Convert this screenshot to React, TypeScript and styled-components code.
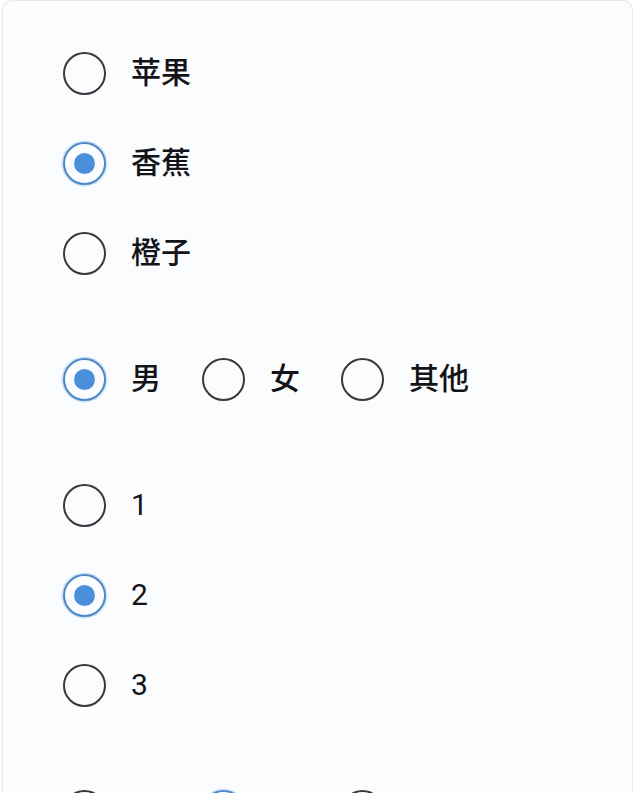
import React, { ReactElement, useState } from 'react';
import styled, { createGlobalStyle } from 'styled-components';

const GlobalStyle = createGlobalStyle`
  html, body {
    margin: 0;
    padding: 0;
    background: #ffffff;
  }
  body {
    font-family: Roboto, "Noto Sans CJK SC", sans-serif;
    color: #141418;
  }
`;

const Card = styled.div`
  margin: 0 5px 0 2px;
  padding: 27px 60px 40px;
  min-height: 900px;
  background: #fafcfd;
  border: 1px solid #e4e8ed;
  border-bottom: none;
  border-radius: 10px 10px 0 0;
  box-sizing: border-box;
`;

const Group = styled.div<{ $inline?: boolean }>`
  display: flex;
  flex-direction: ${props => (props.$inline ? 'row' : 'column')};
  margin-bottom: 36px;
`;

const Option = styled.label<{ $inline?: boolean; $light?: boolean }>`
  display: flex;
  align-items: center;
  gap: 25px;
  height: 90px;
  margin-right: ${props => (props.$inline ? '41px' : '0')};
  font-size: 30px;
  font-weight: ${props => (props.$light ? 400 : 500)};
  line-height: 1;
  cursor: pointer;
`;

const Radio = styled.input.attrs({ type: 'radio' })`
  appearance: none;
  margin: 0;
  width: 43px;
  height: 43px;
  border-radius: 50%;
  border: 2.5px solid #3a373d;
  box-sizing: border-box;
  display: grid;
  place-items: center;
  background: transparent;
  flex-shrink: 0;

  &::before {
    content: '';
    width: 21px;
    height: 21px;
    border-radius: 50%;
    background: #4a8fdb;
    transform: scale(0);
  }

  &:checked {
    border-color: #4d86c4;
    box-shadow: 0 0 0 1.5px rgba(120, 180, 240, 0.35);
  }

  &:checked::before {
    transform: scale(1);
  }
`;

type GroupProps = {
  name: string;
  options: string[];
  initial: string;
  inline?: boolean;
  light?: boolean;
};

function RadioGroup({ name, options, initial, inline, light }: GroupProps): ReactElement {
  const [value, setValue] = useState(initial);
  return (
    <Group $inline={inline}>
      {options.map(opt => (
        <Option key={opt} $inline={inline} $light={light}>
          <Radio name={name} value={opt} checked={value === opt} onChange={() => setValue(opt)} />
          <span>{opt}</span>
        </Option>
      ))}
    </Group>
  );
}

export default function App(): ReactElement {
  return (
    <>
      <GlobalStyle />
      <Card>
        <RadioGroup name="fruit" options={['苹果', '香蕉', '橙子']} initial="香蕉" />
        <RadioGroup name="gender" options={['男', '女', '其他']} initial="男" inline />
        <RadioGroup name="num" options={['1', '2', '3']} initial="2" light />
        <RadioGroup name="level" options={['低', '中', '高']} initial="中" inline />
      </Card>
    </>
  );
}
